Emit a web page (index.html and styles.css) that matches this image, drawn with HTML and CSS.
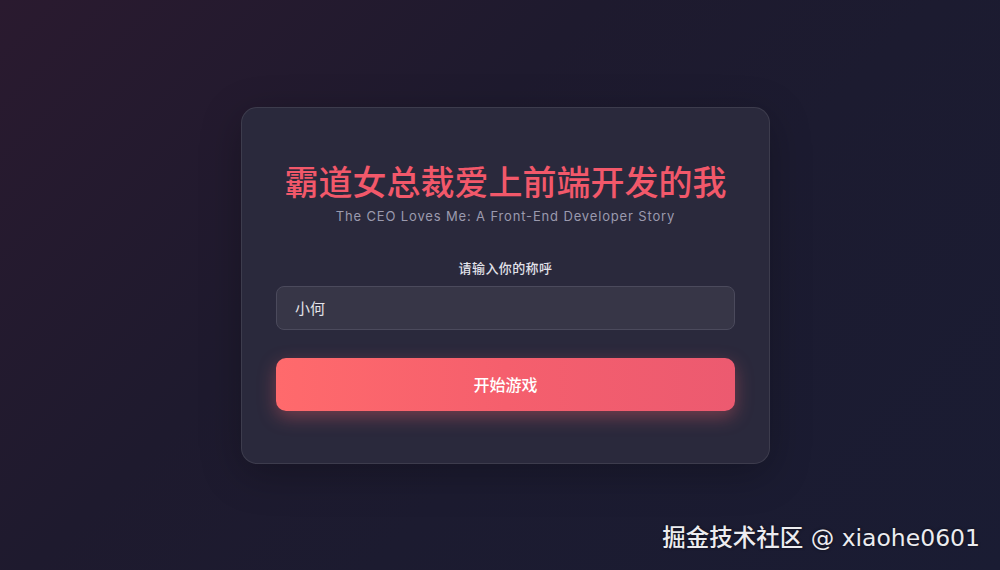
FILE: index.html
```html
<!DOCTYPE html>
<html lang="zh-CN">
<head>
    <meta charset="UTF-8">
    <meta name="viewport" content="width=device-width, initial-scale=1.0">
    <title>霸道女总裁爱上前端开发的我</title>
    <link rel="stylesheet" href="styles.css">
</head>
<body>
<div class="page">
    <div class="card">
        <h1 class="title">霸道女总裁爱上前端开发的我</h1>
        <p class="subtitle">The CEO Loves Me: A Front-End Developer Story</p>
        <form class="form">
            <label for="name">请输入你的称呼</label>
            <input type="text" id="name" value="小何">
            <button type="submit">开始游戏</button>
        </form>
    </div>
    <div class="watermark">掘金技术社区 @ xiaohe0601</div>
</div>
</body>
</html>
```

FILE: styles.css
```css
* {
    box-sizing: border-box;
}

html,
body {
    margin: 0;
    padding: 0;
    height: 100%;
}

body {
    font-family: Inter, 'Noto Sans CJK SC', sans-serif;
    background: linear-gradient(135deg, #2a1a2f 0%, #1e1a2e 38%, #1c1b30 60%, #1a1c33 100%);
    color: #e6e6ee;
    overflow: hidden;
}

.page {
    position: relative;
    height: 100%;
    display: flex;
    align-items: center;
    justify-content: center;
    padding-left: 11px;
}

.card {
    width: 529px;
    padding: 49px 34px 52px;
    background-color: #2a293c;
    border: 1px solid rgba(255, 255, 255, 0.09);
    border-radius: 16px;
    box-shadow: 0 10px 40px rgba(0, 0, 0, 0.25);
    text-align: center;
}

.title {
    margin: 0;
    font-family: 'Noto Sans CJK SC', sans-serif;
    font-size: 34px;
    font-weight: 500;
    line-height: 48px;
    color: #f2586a;
    white-space: nowrap;
}

.subtitle {
    margin: 1px 0 32px;
    font-size: 13px;
    line-height: 20px;
    letter-spacing: 0.85px;
    color: #9b9aae;
}

.form {
    display: flex;
    flex-direction: column;
}

.form label {
    font-family: 'Noto Sans CJK SC', sans-serif;
    font-size: 13px;
    font-weight: 500;
    line-height: 20px;
    letter-spacing: 0.4px;
    color: #e2e2ea;
    margin-bottom: 8px;
}

.form input {
    height: 44px;
    padding: 0 18px;
    font-family: 'Noto Sans CJK SC', sans-serif;
    font-size: 15px;
    color: #e4e4ea;
    background-color: #373647;
    border: 1px solid #4b4a5c;
    border-radius: 8px;
    outline: none;
    margin-bottom: 28px;
}

.form button {
    height: 53px;
    font-family: 'Noto Sans CJK SC', sans-serif;
    font-size: 16px;
    font-weight: 500;
    color: #fff;
    background: linear-gradient(90deg, #ff6a6c 0%, #f55f6d 50%, #ec5a70 100%);
    border: none;
    border-radius: 10px;
    box-shadow: 0 6px 18px rgba(255, 100, 110, 0.35);
    cursor: pointer;
}

.watermark {
    position: absolute;
    right: 20px;
    bottom: 17px;
    font-family: 'DejaVu Sans', 'Noto Sans CJK SC', sans-serif;
    font-size: 23.5px;
    font-weight: 500;
    color: #ececf0;
    text-shadow: 0 0 3px rgba(0, 0, 0, 0.6);
}
```
